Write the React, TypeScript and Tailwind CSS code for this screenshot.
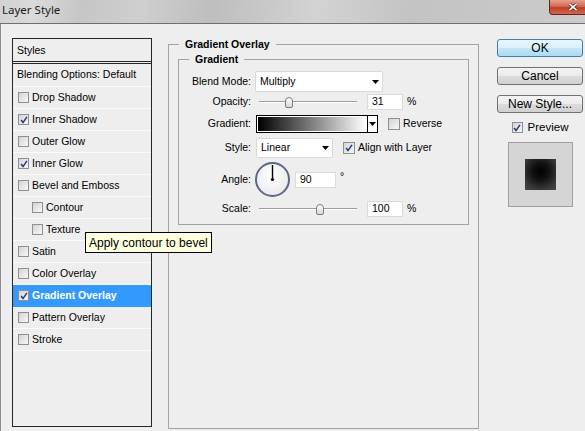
import React from "react";

type StyleItem = {
  label: string;
  checked?: boolean;
  indent?: boolean;
  selected?: boolean;
};

const styleItems: StyleItem[] = [
  { label: "Drop Shadow" },
  { label: "Inner Shadow", checked: true },
  { label: "Outer Glow" },
  { label: "Inner Glow", checked: true },
  { label: "Bevel and Emboss" },
  { label: "Contour", indent: true },
  { label: "Texture", indent: true },
  { label: "Satin" },
  { label: "Color Overlay" },
  { label: "Gradient Overlay", checked: true, selected: true },
  { label: "Pattern Overlay" },
  { label: "Stroke" },
];

const Check = ({ checked, big }: { checked?: boolean; big?: boolean }) => (
  <span
    className={`${big ? "h-[12px] w-[12px]" : "h-[11px] w-[11px]"} flex shrink-0 items-center justify-center border border-[#8e8f8f] bg-[linear-gradient(135deg,#d4d4d4,#f7f7f7)]`}
  >
    {checked && (
      <svg viewBox="0 0 9 9" className="h-[8px] w-[8px]">
        <path d="M1.2 4.6 L3.4 7.4 L7.8 1" fill="none" stroke="#27358a" strokeWidth="1.7" />
      </svg>
    )}
  </span>
);

const Arrow = () => (
  <svg viewBox="0 0 7 4" className="h-[4px] w-[7px]">
    <polygon points="0,0 7,0 3.5,4" fill="#000" />
  </svg>
);

const Select = ({ value, className }: { value: string; className: string }) => (
  <div
    className={`${className} flex shrink-0 items-center justify-between rounded-[2px] border border-[#d9d9d9] bg-white pl-[4px] pr-[3px]`}
  >
    <span>{value}</span>
    <Arrow />
  </div>
);

const Field = ({ value, className }: { value: string; className: string }) => (
  <div className={`${className} flex h-[16px] shrink-0 items-center border border-[#dadada] bg-white pl-[4px]`}>
    {value}
  </div>
);

const Slider = ({ thumb }: { thumb: string }) => (
  <div className="relative ml-[8px] flex h-[16px] w-[98px] shrink-0 items-center">
    <div className="h-[2px] w-full border-t border-[#9d9d9d] bg-white" />
    <div
      className={`${thumb} absolute top-[3px] h-[11px] w-[8px] rounded-t-[4px] rounded-b-[2px] border border-[#7c7c7c] bg-[linear-gradient(#ffffff,#d6d6d6)]`}
    />
  </div>
);

const Label = ({ children }: { children: React.ReactNode }) => (
  <span className="w-[72px] shrink-0 text-right">{children}</span>
);

const Button = ({ children, primary, className = "" }: { children: React.ReactNode; primary?: boolean; className?: string }) => (
  <button
    className={`${className} h-[18px] w-full rounded-[3px] border text-[12px] leading-[16px] text-black ${
      primary
        ? "border-[#3c7fb1] bg-[linear-gradient(#e9f5fc_0%,#dcf0fb_50%,#c3e6f8_50%,#aedaf2_100%)]"
        : "border-[#707070] bg-[linear-gradient(#f3f3f3_0%,#ebebeb_50%,#dddddd_50%,#d0d0d0_100%)]"
    }`}
  >
    {children}
  </button>
);

export default function App() {
  return (
    <div className="relative h-[431px] w-[585px] overflow-hidden bg-[#eeeeee] font-['Liberation_Sans',Arial,sans-serif] text-[10.5px] text-black">
      {/* title bar */}
      <div className="flex h-[24px] border-b border-[#6f6f6f] bg-[linear-gradient(100deg,#d2d2d2_0%,#dadada_6%,#c6c6c6_14%,#cfcfcf_24%,#bebebe_36%,#c9c9c9_46%,#d3d3d3_54%,#c3c3c3_70%,#cbcbcb_100%)]">
        <span className="flex-1 pl-[2px] pt-[3px] font-['Noto_Sans',sans-serif] text-[11.5px] leading-[14px] text-[#1b1b1b]">
          Layer Style
        </span>
        <div className="-mr-[12px] flex h-[15px] w-[48px] shrink-0 items-center justify-center rounded-bl-[4px] border border-t-0 border-[#6b2419] bg-[linear-gradient(#e6a08f,#d46a52_45%,#c13d22_55%,#cf6a50)]">
          <svg viewBox="0 0 10 8" className="h-[8px] w-[10px]">
            <path d="M1.5 0.8 L8.5 7.2 M8.5 0.8 L1.5 7.2" stroke="#5a1a10" strokeWidth="3" />
            <path d="M1.5 0.8 L8.5 7.2 M8.5 0.8 L1.5 7.2" stroke="#ffffff" strokeWidth="1.8" />
          </svg>
        </div>
      </div>

      {/* body */}
      <div className="flex h-[407px] items-start border-l border-[#8c8c8c]">
        {/* styles list */}
        <div className="ml-[11px] mt-[14px] h-[389px] w-[140px] shrink-0 border border-[#262626]">
          <div className="flex h-[25px] items-center border-b-[3px] border-double border-[#262626] pl-[4px] pt-[2px]">
            Styles
          </div>
          <div className="flex h-[23px] items-center border-b border-[#fbfbfb] pl-[4px]">
            Blending Options: Default
          </div>
          {styleItems.map((it) => (
            <div
              key={it.label}
              className={`flex h-[22px] items-center gap-[3px] border-b ${it.indent ? "pl-[19px]" : "pl-[5px]"} ${
                it.selected ? "border-[#3399ff] bg-[#3399ff] font-bold text-white" : "border-[#fbfbfb]"
              }`}
            >
              <Check checked={it.checked} />
              <span>{it.label}</span>
            </div>
          ))}
        </div>

        {/* gradient overlay group */}
        <fieldset className="ml-[16px] mt-[14px] h-[391px] w-[311px] shrink-0 border border-[#a3a3a3]">
          <legend className="ml-[10px] px-[6px] font-bold leading-[13px]">Gradient Overlay</legend>
          <fieldset className="ml-[9px] mt-[2px] w-[291px] border border-[#a3a3a3] pb-[7px]">
            <legend className="ml-[10px] px-[6px] font-bold leading-[13px]">Gradient</legend>
            <div className="flex flex-col pt-[5px]">
              <div className="flex h-[21px] items-center">
                <Label>Blend Mode:</Label>
                <Select value="Multiply" className="ml-[4px] h-[21px] w-[128px]" />
              </div>

              <div className="mt-[2px] flex h-[16px] items-center">
                <Label>Opacity:</Label>
                <Slider thumb="left-[26px]" />
                <Field value="31" className="ml-[10px] w-[36px]" />
                <span className="ml-[4px]">%</span>
              </div>

              <div className="mt-[5px] flex h-[18px] items-center">
                <Label>Gradient:</Label>
                <div className="ml-[5px] flex h-[18px] w-[122px] shrink-0 border border-black bg-white">
                  <div className="m-px flex-1 bg-[linear-gradient(to_right,#000000,#ffffff)]" />
                  <div className="flex w-[10px] items-center justify-center border-l border-black">
                    <Arrow />
                  </div>
                </div>
                <div className="ml-[10px] flex items-center gap-[3px]">
                  <Check big />
                  <span>Reverse</span>
                </div>
              </div>

              <div className="mt-[5px] flex h-[20px] items-center">
                <Label>Style:</Label>
                <Select value="Linear" className="ml-[5px] h-[20px] w-[77px]" />
                <div className="ml-[10px] flex items-center gap-[3px]">
                  <Check checked big />
                  <span>Align with Layer</span>
                </div>
              </div>

              <div className="mt-[4px] flex h-[35px] items-center">
                <Label>Angle:</Label>
                <div className="ml-[4px] h-[35px] w-[35px] shrink-0 rounded-full border-2 border-[#5a668c] bg-[radial-gradient(circle_at_45%_40%,#ffffff,#e4e4e4)]">
                  <svg viewBox="0 0 31 31" className="h-full w-full">
                    <line x1="15.5" y1="15.5" x2="15.5" y2="1" stroke="#000" strokeWidth="1.4" />
                    <circle cx="15.5" cy="15.5" r="1.6" fill="#000" />
                  </svg>
                </div>
                <Field value="90" className="ml-[5px] w-[41px]" />
                <span className="-mt-[5px] ml-[4px]">°</span>
              </div>

              <div className="mt-[4px] flex h-[16px] items-center">
                <Label>Scale:</Label>
                <Slider thumb="left-[57px]" />
                <Field value="100" className="ml-[10px] w-[36px]" />
                <span className="ml-[4px]">%</span>
              </div>
            </div>
          </fieldset>
        </fieldset>

        {/* buttons */}
        <div className="ml-[18px] mt-[15px] flex w-[86px] shrink-0 flex-col">
          <Button primary>OK</Button>
          <Button className="mt-[10px]">Cancel</Button>
          <Button className="mt-[10px]">New Style...</Button>
          <div className="mt-[9px] flex h-[11px] items-center justify-center gap-[5px]">
            <Check checked />
            <span className="text-[11.5px]">Preview</span>
          </div>
          <div className="mx-auto mt-[9px] flex h-[65px] w-[65px] items-center justify-center border border-[#a0a0a0] bg-[#d5d5d5]">
            <div className="h-[31px] w-[31px] bg-[radial-gradient(circle_at_50%_40%,#000000_0%,#121212_35%,#3a3838_75%,#4a4646_100%)]" />
          </div>
        </div>
      </div>

      {/* tooltip */}
      <div className="absolute left-[85px] top-[232px] flex h-[21px] items-center border border-black bg-[#ffffe1] px-[3px] text-[12px]">
        Apply contour to bevel
      </div>
    </div>
  );
}
